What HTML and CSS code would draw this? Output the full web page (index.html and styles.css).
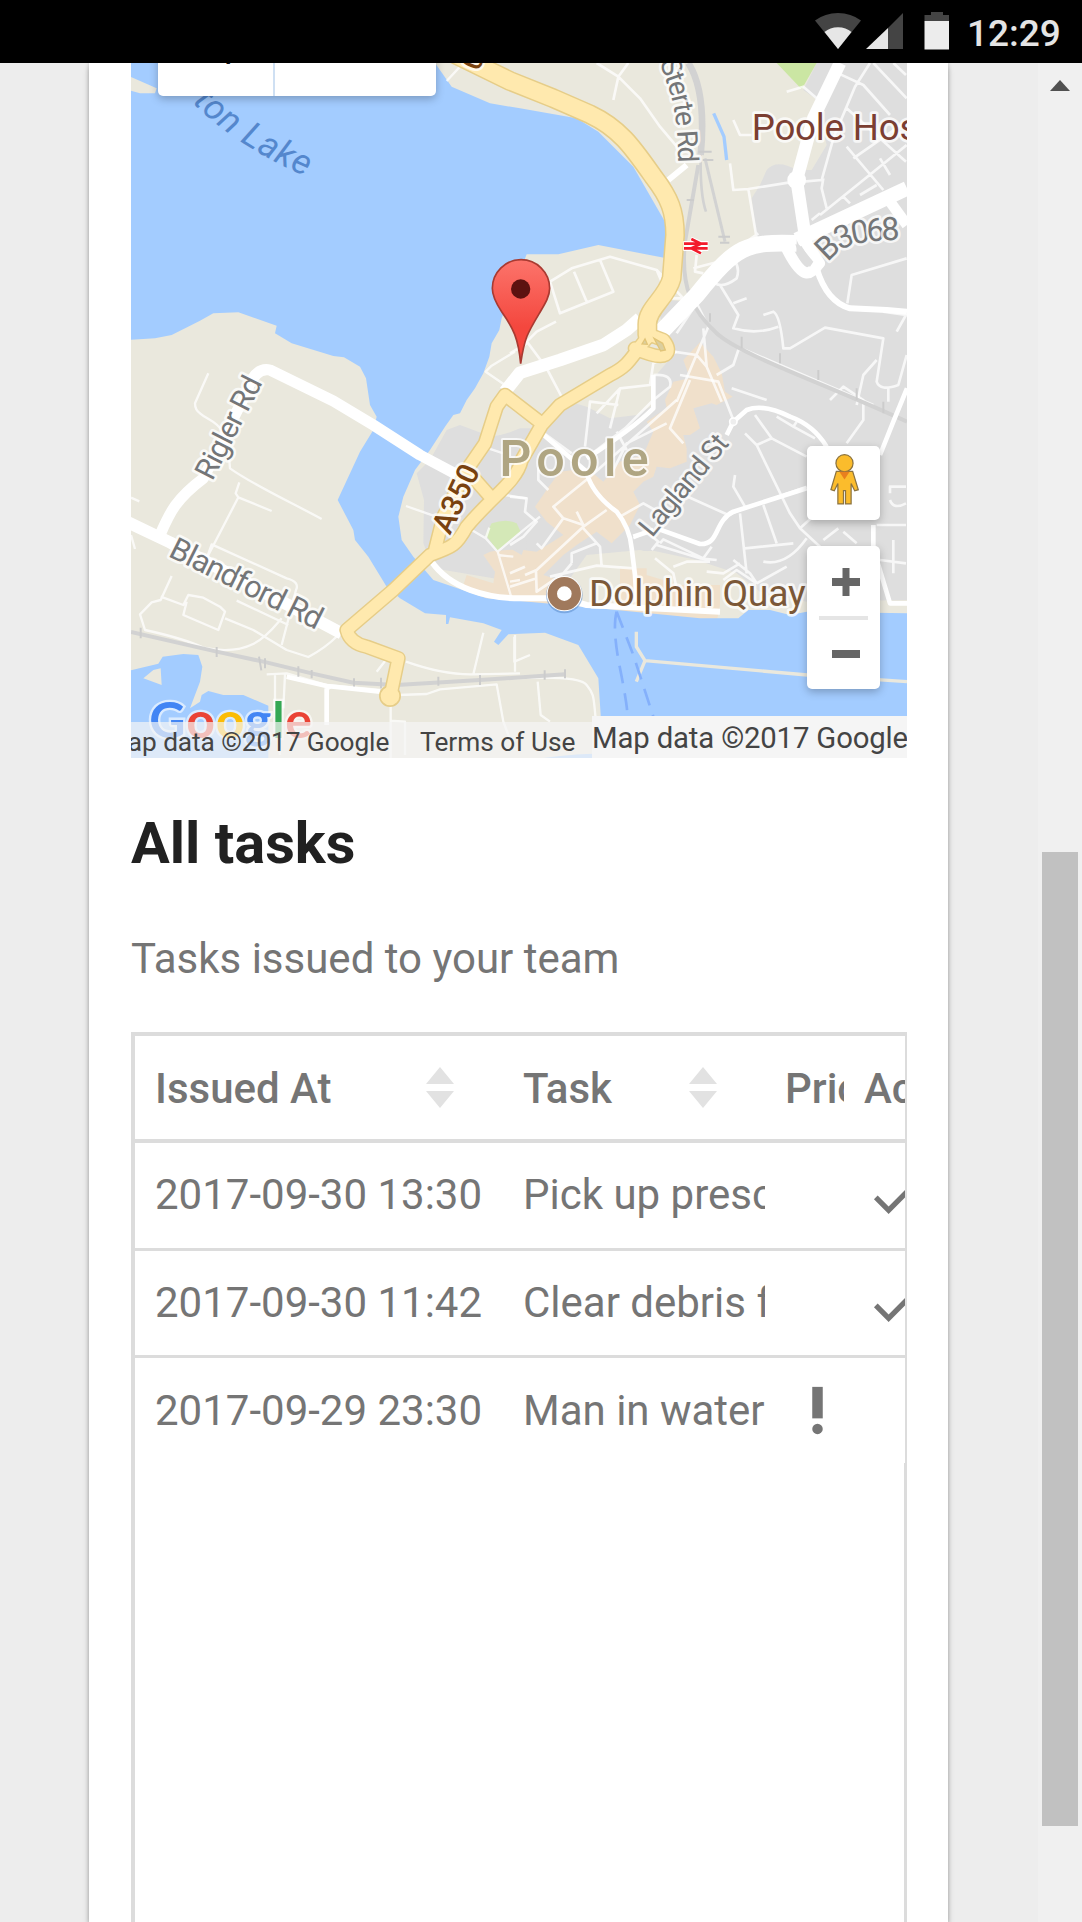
FILE: index.html
```html
<!DOCTYPE html>
<html lang="en">
<head>
<meta charset="utf-8">
<title>All tasks</title>
<link rel="stylesheet" href="styles.css">
</head>
<body>
<header class="status">
  <svg class="status-icons" viewBox="0 0 136 38" width="136" height="38">
    <path fill="#444" d="M23 37 0 8.500Q10 1 23 1T46 8.500Z"/>
    <path fill="#e6e6e6" d="M23 37 9.500 20Q15 15.300 23 15.300T36.500 20Z"/>
    <path fill="#444" d="M88 1V37H73V16Z"/>
    <path fill="#e6e6e6" d="M51 37 73 16V37Z"/>
    <path fill="#444" d="M109.500 9V3H116V0H128V3H134V9Z"/>
    <path fill="#ececec" d="M109.500 9H134V37.500H109.500Z"/>
  </svg>
  <time class="clock">12:29</time>
</header>
<div class="viewport">
  <main class="page">
    <section class="card">
      <div class="map">
        <svg class="tiles" viewBox="33 24 2328 2085" width="776" height="695">
          <rect x="33" y="24" width="2328" height="2085" fill="#eae8dd"/>
          <!-- urban areas -->
          <g fill="#dedede">
            <path d="M2090 24 2050 105 2085 130 2120 270 2075 345 2030 345Q1970 310 1940 345L1920 390 1895 430 1910 550 1860 610 1790 650 1710 740 1640 735 1615 770 1660 900 1600 970 1600 1050 1550 1080 1470 1090 1400 1055 1350 1040 1270 1120 1200 1120Q1130 1150 1100 1140L1020 1110 980 1125 930 1215 890 1255 912 1335 910 1465 940 1540 1120 1570 1300 1640 1400 1500 1560 1485 1700 1520 1850 1555 1920 1610 2060 1640 2361 1635V24Z"/>
          </g>
          <path fill="#eae8dd" d="M1540 1490 1600 1487 1730 1515 1850 1555 1880 1590 1900 1650 1560 1660Z"/>
          <g fill="#f0e0cb">
            <path d="M1740 862 1780 905 1805 955 1815 1010 1838 1025 1790 1050 1775 1045 1720 1060 1740 1120 1710 1140 1690 1140 1700 1180 1700 1220 1650 1240 1610 1235 1600 1265 1570 1280 1540 1310 1560 1350 1530 1410 1475 1465 1430 1430 1370 1470 1330 1500 1270 1560 1360 1590 1360 1655 1170 1638 1090 1630 1030 1590 1040 1560 1120 1585 1125 1550 1090 1500 1110 1490 1170 1480 1205 1500 1210 1485 1250 1490 1330 1440 1280 1400 1245 1355 1290 1290 1320 1250 1400 1240 1450 1280 1500 1220 1570 1200 1600 1130 1580 1100 1640 1060 1635 1035 1660 980 1710 970 1690 915Z"/>
            <path d="M1500 1540H1580V1560L1680 1590H1800V1650L1790 1700 1500 1670Z"/>
          </g>
          <path fill="#cbe6a3" d="M1970 24 2045 103 2090 24Z"/>
          <path fill="#d4e8b7" d="M1097 1440 1115 1405Q1160 1390 1190 1405L1202 1430 1133 1487Z"/>
          <path fill="#dedede" d="M1200 1430 1230 1480 1133 1487Z"/>
          <!-- water -->
          <g fill="#a3ccff">
            <path d="M33 24H945L995 95 1110 145 1200 160 1370 190 1435 230 1540 335 1635 500 1640 610 1435 570 1315 598 1220 598 1145 790 1138 825 1115 865 1108 905 1090 955 1065 1000 1040 1035 1020 1075 1000 1080 975 1115 930 1185 885 1245 850 1325 835 1385 845 1455 880 1505 940 1575 1100 1630 1200 1638 1390 1655 1740 1690 1855 1690 1885 1665 1950 1665 2010 1680 2060 1670 2361 1675V2110H1440L1442 1980 1435 1870 1375 1770 1275 1733 1165 1738 1135 1770 1122 1760 1145 1725 1090 1705 990 1687 985 1707 978 1707 978 1680 915 1675 840 1630 800 1595 745 1505 705 1455 700 1425 653 1335 720 1190 760 1125 770 1085 750 1050 738 970 720 935 672 907 640 903 515 865 465 835 470 812 355 772 280 775 240 797 155 840 105 850 33 854Z"/>
            <path d="M33 1846 115 1826 128 1805 190 1797 235 1800 247 1835 240 1880 210 1960 240 1940 245 1920 265 1908 310 1920 370 1920 445 1952V2109H33Z"/>
            <path d="M1270 2109Q1370 2096 1470 2095V2109Z"/>
          </g>
          <path fill="#eae8dd" d="M33 66 110 100 105 115 60 115 33 107ZM70 1870 100 1845 122 1840 125 1890Z"/>
          <path fill="none" stroke="#a3ccff" stroke-width="10" d="M1781 175 1812 245 1820 315"/>
          <path fill="none" stroke="#eae8dd" stroke-width="10" d="M1549 1730V1775L1575 1817 1549 1880M1575 1817 2062 1860 2361 1880"/>
          <g fill="none" stroke="#84b0fb" stroke-width="8" stroke-dasharray="52 30"><path d="M1490 1670Q1476 1720 1500 1840T1522 1985"/><path d="M1490 1670 1540 1800 1600 1985"/></g>

          <!-- side streets -->
          <g class="lane" stroke-width="7">
            <path d="M265 955 225 1045Q225 1065 240 1075C280 1110 320 1090 330 1240 400 1290 500 1335 605 1392M33 1328 58 1339M358 1282 347 1315 355 1327 455 1368M355 1327 260 1510 275 1468 500 1570Q540 1580 528 1605L485 1770M155 1563 122 1635 95 1642 60 1678 75 1725Q190 1750 250 1778C400 1810 450 1730 485 1690M122 1625 190 1650 205 1620 250 1628 300 1655 315 1670 295 1725 190 1680 200 1640M315 1690 400 1725 500 1785 565 1806Q615 1780 655 1740M350 1637 505 1710M33 1440 45 1482M770 1850 800 1812M858 1820Q970 1860 1060 1858T1200 1855M1060 1858 1090 1733M1185 1740V1850M440 1858 500 1855 620 1890 780 1905M465 1858V1960L480 2100M495 1858 490 1960M620 2000V1905L635 1895M835 1920 920 1917 960 1903 1130 1888 1150 2000 1180 2080M812 1940V2109M812 1997 855 2000V2100M1175 1870Q1380 1860 1400 1890C1425 1920 1420 1930 1428 2000M1183 1745V1820L1230 1800M1253 1880 1262 1980 1290 2000M980 78 1020 35"/>
            <path d="M1155 990 1097 950 1115 932 1185 890M1105 1180 1150 1195M858 1353 940 1382M1055 1425 1097 1450 1108 1418M1097 1450 1133 1490 1202 1432 1260 1385M1133 1490 1175 1630M1133 1500 1180 1505M1170 1580 1200 1575M1155 1320 1220 1330"/>
          </g>
          <g class="lane" stroke-width="8" transform="translate(1170 0)">
            <path d="M260 24 325 65 390 130 450 215 505 280M355 24 325 65 310 135M670 195 690 240 725 240M120 680 185 640 300 605 440 645 455 680M120 680 150 775 310 710 270 615M192 650 232 745M440 645 520 730 470 730M50 860 80 830 138 800M40 845 110 940 160 1035M0 895 50 865M660 325 670 405 715 402 835 383M715 402 740 550M550 640 625 620 745 535M560 600 555 650 580 655M880 380 935 375 970 250 1035 95 1080 24M985 55 1060 90 1140 180M1090 24 1190 130M1150 24 1188 60M1010 160 1188 320M1010 275 1120 405M1030 310 1188 200M940 370 935 400 950 460M930 480 1190 270M1000 425 1020 445M1050 420 1100 390M1110 310 1140 360M930 475 905 495M830 110 880 95 920 130M1190 610 1025 660 1012 745M1120 770 1188 780 1160 830M760 780 790 770Q810 780 820 880H840L945 818 1120 850 1100 980Q1110 1010 1165 990L1190 900M1135 1000V1040M615 685Q640 700 680 670 690 640 675 620M630 690 685 780 670 820Q740 840 805 815M670 745 710 730M500 835 530 790 560 745 595 815 500 1040M490 890 560 900 590 935 635 1040M590 935 580 820M620 960 670 930 685 885 705 885 1090 1050M1040 1050 1060 960 1100 915M665 1000 770 1035"/>
          </g>
          <g class="lane" stroke-width="8" transform="translate(1170 1035)">
            <path d="M260 40 330 -35 420 -45 430 -110 500 -145M330 -35 300 85M325 15 240 5 225 140M95 95 185 160M430 0 345 85 235 170M500 0 240 230M470 70 350 130 300 230M540 -60 480 85 520 130M320 95 350 150M430 -75Q490 -80 480 -40L430 0M510 -75 625 -55 670 60M0 290 50 295 45 335 80 365 40 410 0 435M80 430 95 445 160 355 130 320 235 235M85 200 85 240 115 270M160 355 220 375 200 335M45 525 80 510 220 380 290 330M220 385 270 440 275 500M185 490 185 460 260 430M185 490 160 520 80 575 78 515M120 530 260 497 370 505M330 350 400 310 435 330M370 415 410 395 445 425 425 450M450 430 460 418 580 475 605 440M440 435 570 475 620 480M435 475 490 520 500 565M490 500 530 485H600M500 275 655 345M655 345 690 330 890 260M690 340 710 520M670 480 720 520 740 550M705 100 740 135 840 340 870 385 930 440M735 45 785 115 890 170M740 135 785 115M675 225 670 260 705 320M760 315 800 430M705 445 850 430M760 485Q830 500 890 415M870 385 920 340M800 50 850 80 915 115M850 80 860 65M960 0 1000 -40 1060 0 1060 60 1010 130M1140 280V260H1188M1140 300Q1150 330 1188 310M1150 420 1150 520M1110 480 1188 490M1000 395 1040 430M940 420 985 385M590 515 640 520 690 490M740 550 830 500M640 540 680 510 740 550M1100 375H1188M0 520 45 500M0 560 80 535"/>
          </g>

          <!-- railway -->
          <g fill="none" stroke="#d2d2d2" stroke-width="12">
            <path d="M33 1731 290 1790 430 1820 575 1855 700 1883 830 1890 1080 1875 1335 1858"/>
            <path stroke-width="20" d="M1705 24Q1760 110 1742 300"/>
            <path d="M1735 330 1695 560C1680 700 1720 770 1790 835S2100 980 2361 1100"/>
            <path stroke-width="8" d="M1742 300Q1740 420 1758 470"/><path stroke-width="9" d="M1755 310 1815 560"/>
          </g>
          <path fill="none" stroke="#ccc" stroke-width="6" d="M62 1718V1750M290 1776V1806M417 1805 424 1846M435 1810V1840M535 1834V1865M575 1845V1870M702 1870V1896M783 1868V1900M955 1865V1892M1080 1860V1890M1274 1846V1874M1335 1843V1870M1700 435H1722M1735 290H1775M1748 315H1780M1795 545H1830M1800 563H1828M1770 775V800M1865 845V880M1980 895V925M2095 945V975M2210 1000V1035M2290 1040V1075"/>

          <!-- main roads -->
          <g class="lane">
            <path stroke-width="33" d="M120 1440C150 1370 170 1330 250 1270L380 1010Q405 935 450 945L640 1038 760 1110 900 1200 1050 1280"/>
            <path stroke-width="36" d="M20 1400 150 1462 665 1735"/>
            <path stroke-width="38" d="M1155 1010 1200 953 1320 915 1450 870 1520 825 1560 790"/>
            <path stroke-width="50" d="M1620 835 1730 720C1850 570 1880 560 2030 565"/>
            <path stroke-width="44" d="M2030 555 2361 400"/>
            <path stroke-width="38" d="M2160 24 2080 190 2030 375 2055 540"/>
            <path stroke-width="34" d="M2000 580C2050 680 2070 660 2098 625L2050 550"/>
            <path stroke-width="32" d="M2310 440 2361 510"/>
            <path stroke-width="18" d="M2090 640Q2120 740 2190 760L2300 765 2361 770M1645 375 1700 330M935 1520C990 1600 1100 1630 1200 1630H1170L1330 1630 1400 1650 1800 1670"/>
            <path stroke-width="14" d="M1400 1255Q1420 1320 1490 1370 1530 1420 1535 1480L1545 1560 1550 1640M1265 1135 1330 1190 1400 1250M1600 960V1060Q1540 1120 1400 1210M1540 1445 1600 1425M1610 1420 1740 1467C1800 1470 1780 1400 1840 1370L2060 1300M1840 1100 1880 1065Q1930 1045 2010 1085 2080 1110 2120 1175M1840 1100 1820 1140M2361 1000 2320 1100 2280 1200M2260 1410V1480L2310 1645 2361 1645M500 1865 620 1893 780 1910M620 2010 620 1900"/>
          </g>
          <circle cx="2030" cy="375" r="28" fill="#fff"/><circle cx="1840" cy="1100" r="11" fill="#eee" stroke="#fff" stroke-width="5"/>
          <path fill="#dedede" d="M2026 568 2038 570 2080 620 2070 635 2045 620Z"/>

          <g fill="none" stroke-linejoin="round" stroke-linecap="round">
            <g stroke="#e6cd88">
              <path stroke-width="60" d="M1010 0 1170 78 1300 130 1410 178C1500 220 1540 280 1600 365 1650 430 1665 470 1665 540L1655 670C1640 730 1580 760 1582 810V840"/>
              <path stroke-width="44" d="M1580 850C1530 910 1530 930 1470 960L1320 1050 1265 1110 1205 1215C1190 1280 1120 1320 1040 1415 1010 1470 1000 1475 930 1500L820 1605 680 1725Q690 1765 740 1775L835 1810 812 1920M1155 1020 1130 1055 1095 1165 1040 1245 970 1385 945 1485M1155 1020 1265 1105M1040 1245 1115 1330M1585 838 1630 855Q1655 885 1635 900 1615 912 1545 880"/>
              <circle cx="810" cy="1923" r="16" stroke-width="34"/>
            </g>
            <g stroke="#ffe9ae">
              <path stroke-width="51" d="M1010 0 1170 78 1300 130 1410 178C1500 220 1540 280 1600 365 1650 430 1665 470 1665 540L1655 670C1640 730 1580 760 1582 810V840"/>
              <path stroke-width="35" d="M1580 850C1530 910 1530 930 1470 960L1320 1050 1265 1110 1205 1215C1190 1280 1120 1320 1040 1415 1010 1470 1000 1475 930 1500L820 1605 680 1725Q690 1765 740 1775L835 1810 812 1920M1155 1020 1130 1055 1095 1165 1040 1245 970 1385 945 1485M1155 1020 1265 1105M1040 1245 1115 1330M1585 838 1630 855Q1655 885 1635 900 1615 912 1545 880"/>
              <circle cx="810" cy="1923" r="14" stroke-width="28"/>
            </g>
          </g>
          <path fill="#dbcf9f" stroke="#e1c478" stroke-width="4" d="M1602 850 1628 865 1636 885 1622 888ZM1566 867 1575 852 1582 868Z"/>

          <!-- National Rail mark -->
          <rect x="1690" y="558" width="75" height="30" fill="#fff"/>
          <path fill="none" stroke="#fff" stroke-width="14" d="M1712 552 1745 566 1712 580 1745 594"/>
          <path fill="none" stroke="#f31b2b" stroke-width="8" d="M1692 566H1763M1692 580H1763M1714 552 1743 566 1714 580 1743 595"/>

          <defs>
            <path id="sterte" d="M1620 20C1645 110 1672 130 1675 330"/>
            <path id="b3068" d="M2125 624C2165 566 2220 558 2345 554"/>
            <path id="lake" d="M140 60C235 165 320 262 575 372"/>
          </defs>
          <text class="label water" font-size="106"><textPath href="#lake" startOffset="72" textLength="448">rton Lake</textPath></text>
          <text class="label" font-size="85"><textPath href="#sterte" textLength="310">Sterte Rd</textPath></text>
          <text class="label" font-size="97"><textPath href="#b3068" textLength="236">B3068</textPath></text>
          <text class="label" font-size="90" textLength="334" transform="translate(277 1280) rotate(-63)">Rigler Rd</text>
          <text class="label" font-size="93" textLength="500" transform="translate(142 1502) rotate(26.500)">Blandford Rd</text>
          <text class="label" font-size="86" textLength="368" transform="translate(1596 1450) rotate(-50.500)">Lagland St</text>
          <text class="label aroad" font-size="91" textLength="216" transform="translate(990 1442) rotate(-65)">A350</text>
          <text class="label aroad" font-size="85" transform="translate(1076 50) rotate(-68)">0</text>
          <text class="label hospital" font-size="110" x="1895" y="256">Poole Hospital</text>
          <text class="label town" font-size="151" x="1138" y="1262" textLength="448">Poole</text>
          <text class="label quay" font-size="112" x="1407" y="1654" textLength="650">Dolphin Quay</text>
          <circle cx="1333" cy="1620" r="55" fill="#5b8dcc" opacity=".55"/>
          <circle cx="1333" cy="1616" r="53" fill="#fff"/><circle cx="1333" cy="1616" r="36" fill="#fff" stroke="#a0795c" stroke-width="28"/>

          <!-- marker -->
          <linearGradient id="pin" x1="0" y1="0" x2="0" y2="1"><stop offset="0" stop-color="#fc746b"/><stop offset=".65" stop-color="#f4473e"/></linearGradient>
          <path fill="url(#pin)" stroke="#a93a31" stroke-width="5" d="M1202 926C1195 850 1180 820 1145 770 1128 745 1117 725 1117 700A86 86 0 0 1 1289 700C1289 725 1274 748 1258 775 1222 835 1213 850 1202 926Z"/>
          <circle cx="1202" cy="702" r="29" fill="#5c1210"/>

          <text class="logo" x="88" y="2050" font-size="150" textLength="488"><tspan fill="#4285f4">G</tspan><tspan fill="#ea4335">o</tspan><tspan fill="#fbbc05">o</tspan><tspan fill="#4285f4">g</tspan><tspan fill="#34a853">l</tspan><tspan fill="#ea4335">e</tspan></text>
        </svg>
        <div class="types"><span class="type">Map</span><span class="type wide"></span></div>
        <div class="ctl pegman">
          <svg viewBox="0 0 28 50" width="29" height="51"><g fill="#fbbc2c" stroke="#8b7340" stroke-width="1.200"><path d="M6 17H22L27.500 35 24 36 20.500 29V49H15V36H13V49H7.500V29L4 36 .7 35Z"/><circle cx="14" cy="9" r="8.400"/></g><path fill="#e8801e" d="M9 17.500H19L14 25Z"/></svg>
        </div>
        <div class="ctl zoom">
          <svg viewBox="0 0 28 28" width="28" height="28"><path fill="#666" d="M10.500 0h7v10h10.500v8H17.500v10h-7V18H0v-8h10.500z"/></svg>
          <i class="rule"></i>
          <svg viewBox="0 0 28 8" width="28" height="8"><path fill="#666" d="M0 0h28v8H0z"/></svg>
        </div>
        <div class="attrib small"><span class="copy">Map data ©2017 Google</span><span class="terms">Terms of Use</span></div>
        <div class="attrib large">Map data ©2017 Google</div>
      </div>
      <h2 class="title">All tasks</h2>
      <p class="lead">Tasks issued to your team</p>
      <div class="table">
        <div class="row head">
          <div class="cell">Issued At<svg class="sort" viewBox="0 0 28 42" width="28" height="42"><path d="M14 0 28 17H0ZM0 24H28L14 41Z"/></svg></div>
          <div class="cell">Task<svg class="sort task" viewBox="0 0 28 42" width="28" height="42"><path d="M14 0 28 17H0ZM0 24H28L14 41Z"/></svg></div>
          <div class="cell">Priority</div>
          <div class="cell">Acknowledged</div>
        </div>
        <div class="row">
          <div class="cell">2017-09-30 13:30</div><div class="cell">Pick up prescription</div><div class="cell"></div>
          <div class="cell"><svg class="icon" viewBox="0 0 24 24"><path d="M9 16.170 4.830 12l-1.420 1.410L9 19 21 7l-1.410-1.410z"/></svg></div>
        </div>
        <div class="row">
          <div class="cell">2017-09-30 11:42</div><div class="cell">Clear debris from road</div><div class="cell"></div>
          <div class="cell"><svg class="icon" viewBox="0 0 24 24"><path d="M9 16.170 4.830 12l-1.420 1.410L9 19 21 7l-1.410-1.410z"/></svg></div>
        </div>
        <div class="row">
          <div class="cell">2017-09-29 23:30</div><div class="cell">Man in water</div>
          <div class="cell"><svg class="icon" viewBox="0 0 24 24"><circle cx="12" cy="19" r="2"/><path d="M10 3h4v12h-4z"/></svg></div><div class="cell"></div>
        </div>
        <div class="rest"></div>
      </div>
    </section>
  </main>
  <aside class="scrollbar">
    <svg class="arrow" viewBox="0 0 20 11" width="20" height="11"><path fill="#505050" d="M10 0 20 11H0Z"/></svg>
    <div class="thumb"></div>
  </aside>
</div>
</body>
</html>
```
FILE: styles.css
```css
* { box-sizing: border-box; }
body {
  margin: 0;
  height: 1922px;
  overflow: hidden;
  display: flex;
  flex-direction: column;
  font-family: Roboto, sans-serif;
  color: #757575;
  background: #ededed;
}
svg { display: block; flex: none; }

.status {
  flex: none;
  height: 63px;
  padding: 3px 23px 0 0;
  background: #000;
  display: flex;
  justify-content: flex-end;
  align-items: center;
  gap: 16px;
  position: relative;
  z-index: 2;
}
.status-icons { margin-top: -4px; }
.clock { width: 92px; font-size: 37px; font-weight: 500; color: #e4e4e4; }

.viewport { flex: 1; display: flex; min-height: 0; }
.page { width: 1038px; padding-left: 89px; display: flex; }
.card {
  width: 859px;
  padding: 0 42px;
  background: #fff;
  box-shadow: 0 5px 6px rgba(0, 0, 0, .22), 0 0 4px rgba(0, 0, 0, .2);
  display: flex;
  flex-direction: column;
}

.map { flex: none; width: 776px; height: 695px; position: relative; overflow: hidden; }
.lane { fill: none; stroke: #fff; stroke-linejoin: round; }
.lane[stroke-width] { opacity: .75; }
.label {
  fill: #747678;
  stroke: rgba(255, 255, 255, .75);
  stroke-width: 16px;
  stroke-linejoin: round;
  paint-order: stroke;
}
.water { fill: #5487cd; stroke: none; font-style: italic; }
.aroad { fill: #79420f; font-weight: 500; }
.hospital { fill: #7b3e32; letter-spacing: -.5px; }
.town { fill: #afa582; font-weight: 500; stroke-width: 12px; }
.quay { fill: #7b5838; }
.logo { font-family: Lato, sans-serif; font-weight: 700; stroke: rgba(255, 255, 255, .6); stroke-width: 14px; paint-order: stroke; }

.types {
  position: absolute;
  left: 27px;
  top: -40px;
  width: 278px;
  height: 73px;
  border-radius: 5px;
  background: #fff;
  box-shadow: 0 3px 8px rgba(0, 0, 0, .25);
  display: flex;
}
.type { width: 115px; padding-right: 6px; text-align: center; font-size: 29px; line-height: 50px; font-weight: 500; color: #111; }
.wide { border-left: 2px solid #cfe0f3; width: 163px; }
.ctl {
  position: absolute;
  left: 676px;
  width: 73px;
  background: #fff;
  border-radius: 5px;
  box-shadow: 0 3px 8px rgba(0, 0, 0, .25);
  display: flex;
  flex-direction: column;
  align-items: center;
}
.pegman { top: 383px; height: 74px; padding: 8px 0 0 2px; }
.zoom { top: 483px; height: 143px; padding: 22px 0 0 4px; }
.rule { width: 49px; height: 4px; margin: 20px 4px 30px 0; background: #e5e5e5; }
.attrib {
  position: absolute;
  color: #444;
  white-space: nowrap;
  display: flex;
}
.small {
  left: 0;
  bottom: 0;
  width: 461px;
  height: 36px;
  font-size: 26.250px;
  line-height: 40px;
  background: rgba(245, 245, 245, .7);
}
.copy { margin-left: -26px; width: 315px; letter-spacing: -.08px; }
.large { left: 461px; bottom: 0; width: 315px; height: 42px; background: #f5f5f5; font-size: 29.300px; letter-spacing: -.15px; line-height: 44px; }

.title { margin: 51px 0 0; font-size: 57.750px; line-height: 68px; font-weight: 700; color: #212121; }
.lead { margin: 54px 0 0; font-size: 42px; line-height: 56px; }

.table {
  margin-top: 45px;
  flex: 1;
  width: 776px;
  border-top: 4px solid #dcdcdc;
  border-left: 4px solid #dcdcdc;
  display: flex;
  flex-direction: column;
  font-size: 42px;
}
.row {
  flex: none;
  height: 107.700px;
  display: grid;
  grid-template-columns: 367px 263px 79px 61px;
  border-bottom: 3px solid #dcdcdc;
  border-right: 2px solid #dcdcdc;
  padding-bottom: 1px;
}
.row:nth-child(4) { border-bottom: 0; height: 105px; }
.head { height: 107px; border-bottom-width: 4px; padding: 1px 0 0; font-weight: 500; }
.cell {
  display: flex;
  align-items: center;
  min-width: 0;
  padding-left: 20px;
  overflow: hidden;
  white-space: nowrap;
}
.cell:nth-child(2) { padding-left: 21px; }
.sort { margin: 0 48px 0 auto; fill: #e2e2e2; }
.icon { width: 63px; height: 63px; margin: 1px 0 0 1px; fill: #757575; }
.rest { flex: 1; border-right: 3px solid #dcdcdc; }

.scrollbar { width: 44px; background: #f0f0f0; display: flex; flex-direction: column; align-items: center; }
.arrow { margin-top: 17px; }
.thumb { width: 36px; height: 974px; margin-top: 761px; background: #c1c1c1; }
```
